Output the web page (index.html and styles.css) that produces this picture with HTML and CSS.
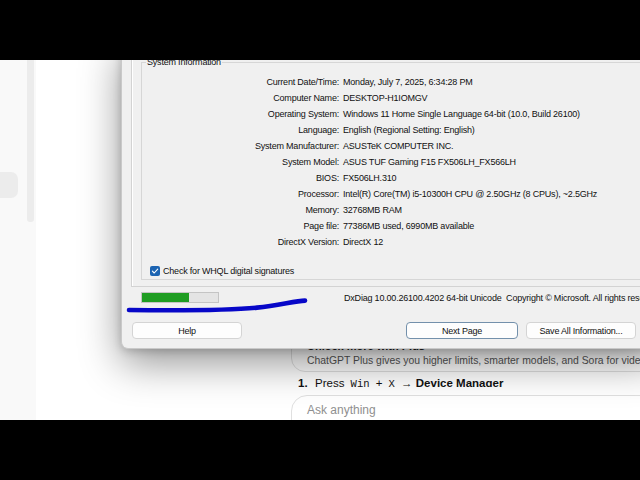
FILE: index.html
```html
<!DOCTYPE html>
<html lang="en">
<head>
<meta charset="utf-8">
<title>DxDiag over ChatGPT</title>
<link rel="stylesheet" href="styles.css">
</head>
<body>
<div class="frame">
  <aside class="sidebar">
    <div class="side-list">
      <div class="side-item"></div>
    </div>
    <div class="side-scroll"></div>
  </aside>

  <main class="chat">
    <div class="thread">
      <div class="upsell">
        <div class="upsell-title">Unlock more with Plus</div>
        <div class="upsell-text">ChatGPT Plus gives you higher limits, smarter models, and Sora for video.</div>
      </div>
      <ol class="steps">
        <li><span class="num">1.</span>Press <code>Win</code> + <code>X</code> → <b>Device Manager</b></li>
      </ol>
      <div class="composer">Ask anything</div>
    </div>
  </main>

  <section class="dialog">
    <div class="tabpage">
      <fieldset class="group">
        <legend>System Information</legend>
        <dl class="info">
          <dt>Current Date/Time:</dt><dd>Monday, July 7, 2025, 6:34:28 PM</dd>
          <dt>Computer Name:</dt><dd>DESKTOP-H1IOMGV</dd>
          <dt>Operating System:</dt><dd>Windows 11 Home Single Language 64-bit (10.0, Build 26100)</dd>
          <dt>Language:</dt><dd>English (Regional Setting: English)</dd>
          <dt>System Manufacturer:</dt><dd>ASUSTeK COMPUTER INC.</dd>
          <dt>System Model:</dt><dd>ASUS TUF Gaming F15 FX506LH_FX566LH</dd>
          <dt>BIOS:</dt><dd>FX506LH.310</dd>
          <dt>Processor:</dt><dd>Intel(R) Core(TM) i5-10300H CPU @ 2.50GHz (8 CPUs), ~2.5GHz</dd>
          <dt>Memory:</dt><dd>32768MB RAM</dd>
          <dt>Page file:</dt><dd>77386MB used, 6990MB available</dd>
          <dt>DirectX Version:</dt><dd>DirectX 12</dd>
        </dl>
        <label class="check">
          <span class="box"><svg viewBox="0 0 10 10" width="10" height="10"><path d="M2.4 5.2 L4.2 7 L7.7 3.2" fill="none" stroke="#fff" stroke-width="1.1" stroke-linecap="round" stroke-linejoin="round"/></svg></span>
          <span>Check for WHQL digital signatures</span>
        </label>
      </fieldset>
    </div>
    <div class="status">
      <div class="progress"><div class="fill" style="width:62%"></div></div>
      <span class="version">DxDiag 10.00.26100.4202 64-bit Unicode&nbsp; Copyright © Microsoft. All rights reserved.</span>
    </div>
    <div class="buttons">
      <button class="btn btn-help">Help</button>
      <button class="btn btn-next">Next Page</button>
      <button class="btn btn-save">Save All Information...</button>
    </div>
  </section>

  <svg class="scribble" width="640" height="360" viewBox="0 0 640 360">
    <path d="M129 250 C 190 250.6 232 250.2 257 247.6 C 279 245.3 295 241 305 240.6" fill="none" stroke="#0707c8" stroke-width="4.6" stroke-linecap="round"/>
  </svg>
</div>
</body>
</html>
```

FILE: styles.css
```css
* { box-sizing: border-box; }

html, body {
  margin: 0;
  padding: 0;
  background: #000;
}

body {
  width: 640px;
  height: 480px;
  overflow: hidden;
  font-family: "Liberation Sans", Arial, sans-serif;
}

.frame {
  position: relative;
  margin-top: 60px;
  width: 640px;
  height: 360px;
  overflow: hidden;
  background: #fff;
  display: flex;
}

/* left sidebar */
.sidebar {
  width: 36px;
  flex: none;
  background: #f9f9f9;
  display: flex;
}
.side-list {
  width: 27px;
  padding-top: 112px;
}
.side-item {
  width: 18px;
  height: 26px;
  background: #ececec;
  border-radius: 0 7px 7px 0;
}
.side-scroll {
  width: 7px;
  height: 162px;
  background: #ececec;
  border-radius: 0 0 3px 3px;
}

/* chat */
.chat {
  flex: 1;
  min-width: 0;
  padding-left: 255px;
}
.thread {
  width: 420px;
  padding-top: 269px;
}
.upsell {
  border: 1px solid #e0e0e0;
  border-radius: 14px;
  padding: 9px 15px 3px;
}
.upsell-title {
  font-size: 11px;
  line-height: 14px;
  font-weight: bold;
  color: #222;
  white-space: nowrap;
}
.upsell-text {
  margin-top: 1px;
  font-size: 10.4px;
  line-height: 14px;
  color: #555;
  white-space: nowrap;
}
.steps {
  margin: 4px 0 0;
  padding: 0 0 0 7px;
  list-style: none;
  height: 11px;
  overflow: hidden;
  font-size: 11.5px;
  line-height: 14px;
  color: #111;
  white-space: nowrap;
}
.steps .num {
  display: inline-block;
  width: 17px;
  font-weight: bold;
}
.steps code {
  font-family: "Liberation Mono", monospace;
  font-size: 10.5px;
  padding: 0 3px;
}
.composer {
  margin-top: 8px;
  height: 60px;
  border: 1px solid #e0e0e0;
  border-radius: 16px;
  padding: 7px 15px;
  background: #fff;
  font-size: 12px;
  line-height: 14px;
  color: #8f8f8f;
}

/* DxDiag window */
.dialog {
  position: absolute;
  left: 121px;
  top: -20px;
  width: 540px;
  height: 309px;
  display: flex;
  flex-direction: column;
  background: #f0f0f0;
  border: 1px solid #c9c9c9;
  border-top: none;
  border-radius: 0 0 7px 7px;
  box-shadow: 0 14px 40px rgba(0, 0, 0, 0.42), 0 2px 8px rgba(0, 0, 0, 0.18);
  font-size: 9px;
  letter-spacing: -0.2px;
  color: #111;
}
.tabpage {
  flex: none;
  height: 247px;
  margin-left: 9px;
  padding: 15px 0 0 9px;
  border-left: 1px solid #d3d3d3;
  border-bottom: 1px solid #d3d3d3;
  box-shadow: inset 1px 0 #fff;
}
.group {
  margin: 0;
  padding: 5px 0 2px 0;
  border: 1px solid #d6d6d6;
  border-right: none;
  min-width: 0;
}
.group legend {
  margin-left: 4px;
  padding: 0 1px;
  line-height: 14px;
}
.info {
  margin: 0;
  display: grid;
  grid-template-columns: 197px 1fr;
  column-gap: 4px;
  grid-auto-rows: 16px;
  line-height: 16px;
  white-space: nowrap;
}
.info dt {
  text-align: right;
}
.info dd {
  margin: 0;
}
.check {
  margin: 15px 0 0 8px;
  height: 12px;
  display: flex;
  align-items: center;
  gap: 3px;
  white-space: nowrap;
}
.box {
  width: 10px;
  height: 10px;
  border-radius: 2px;
  background: #1c64b2;
  display: flex;
}
.status {
  display: flex;
  align-items: center;
  height: 11px;
  margin: 5px 0 0 19px;
}
.progress {
  flex: none;
  width: 78px;
  height: 11px;
  background: #e4e4e4;
  border: 1px solid #c4c4c4;
}
.fill {
  height: 100%;
  background: #1f9d22;
}
.version {
  margin-left: 125px;
  white-space: nowrap;
}
.buttons {
  display: flex;
  height: 17px;
  margin: 19px 0 0 10px;
}
.btn {
  font: inherit;
  letter-spacing: inherit;
  color: #111;
  height: 17px;
  padding: 0;
  background: #fdfdfd;
  border: 1px solid #d4d4d4;
  border-radius: 4px;
}
.btn-help { width: 110px; }
.btn-next {
  width: 112px;
  margin-left: 164px;
  border-color: #7390ab;
}
.btn-save {
  width: 110px;
  margin-left: 8px;
}

.scribble {
  position: absolute;
  left: 0;
  top: 0;
  pointer-events: none;
}
```
